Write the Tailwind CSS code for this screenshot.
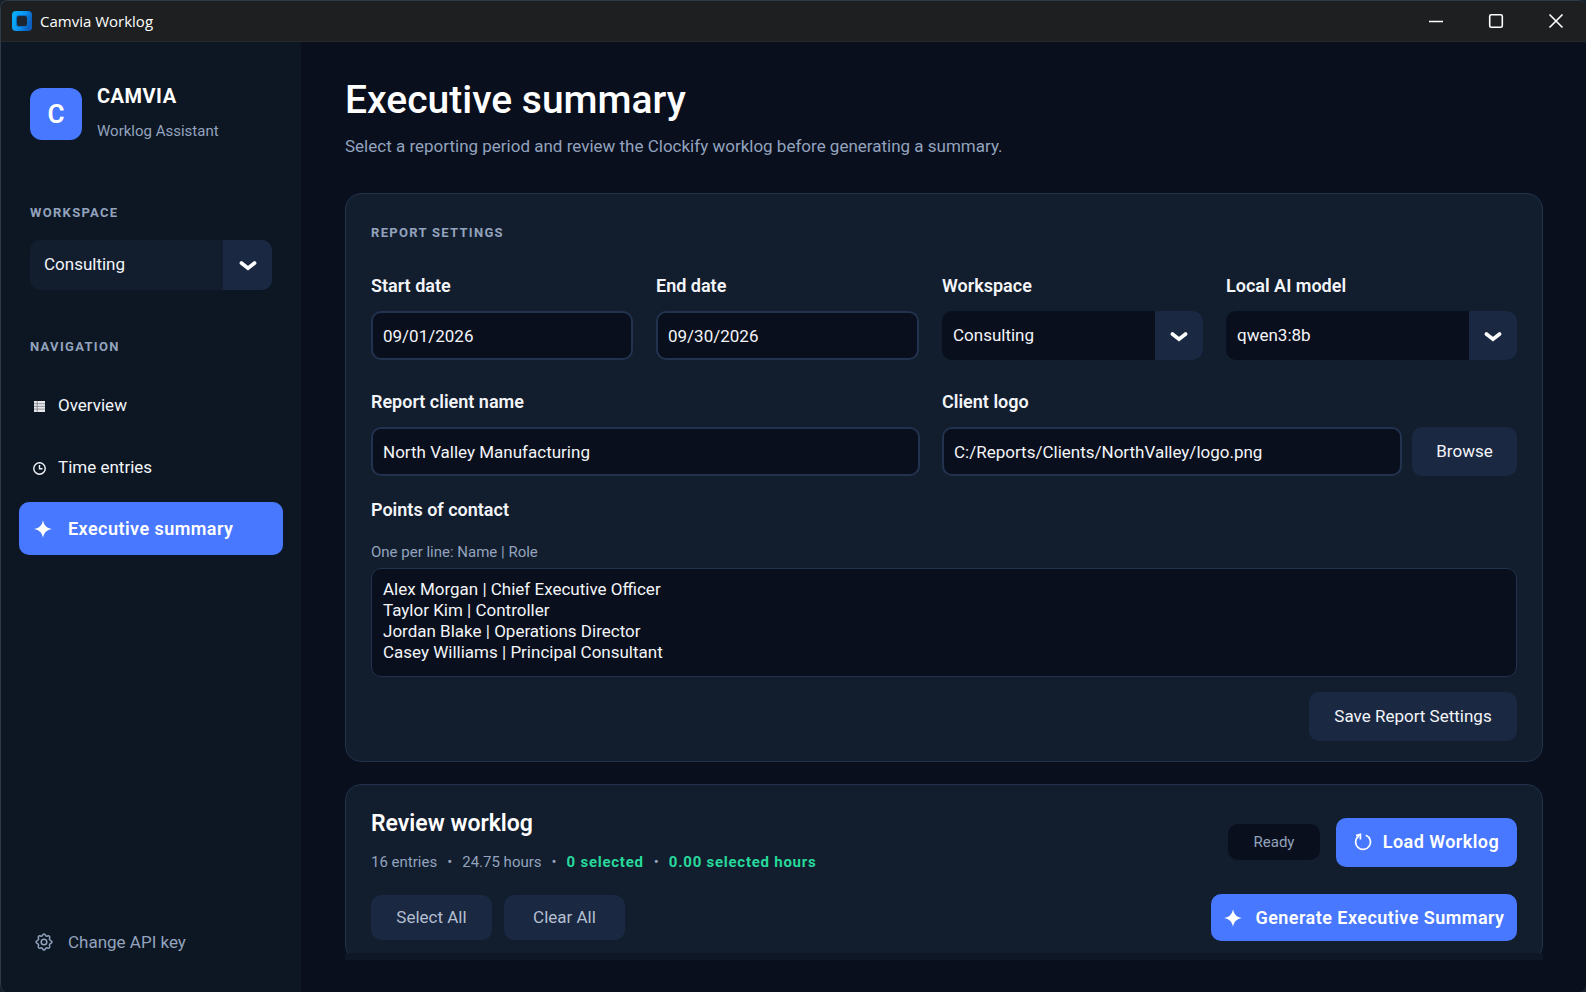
<!DOCTYPE html>
<html lang="en">
<head>
    <meta charset="UTF-8">
    <meta name="viewport" content="width=device-width, initial-scale=1.0">
    <title>Camvia Worklog</title>
    <script src="https://cdn.jsdelivr.net/npm/@tailwindcss/browser@4"></script>
</head>
<body class="bg-[#17212c] font-[Roboto,sans-serif] text-[17px] text-[#f3f5f9]">
<div class="flex min-h-screen flex-col overflow-hidden rounded-lg border-t border-l border-[#303a46] bg-[#090f1d]">
    <!-- Title bar -->
    <header class="flex h-[41px] items-center justify-between border-b border-[#27282b] bg-[#1e1f21] pl-[11px]">
        <div class="flex items-center gap-2">
            <svg class="size-5" viewBox="0 0 20 20">
                <defs>
                    <linearGradient id="marca" x1="0" y1="0" x2="1" y2="0.4">
                        <stop offset="0" stop-color="#08b4fb"/>
                        <stop offset="0.6" stop-color="#0c93ee"/>
                        <stop offset="1" stop-color="#0a5fc0"/>
                    </linearGradient>
                </defs>
                <rect width="20" height="20" rx="4" fill="url(#marca)"/>
                <rect x="4.5" y="4.5" width="11" height="11" rx="2.5" fill="#1d2630" stroke="#0b6fc9" stroke-width="1"/>
            </svg>
            <span class="font-['Open_Sans',sans-serif] text-[15px] text-white">Camvia Worklog</span>
        </div>
        <div class="flex h-full">
            <button type="button" aria-label="Minimize" class="flex w-[60px] items-center justify-center">
                <svg class="size-4" viewBox="0 0 16 16" stroke="#fff" stroke-width="1.5"><path d="M1 8.5h14"/></svg>
            </button>
            <button type="button" aria-label="Maximize" class="flex w-[60px] items-center justify-center">
                <svg class="size-4" viewBox="0 0 16 16" fill="none" stroke="#fff" stroke-width="1.6"><rect x="1.7" y="1.7" width="12.6" height="12.6" rx="1.5"/></svg>
            </button>
            <button type="button" aria-label="Close" class="flex w-[60px] items-center justify-center">
                <svg class="size-4" viewBox="0 0 16 16" stroke="#fff" stroke-width="1.6"><path d="M1.5 1.5l13 13M14.5 1.5l-13 13"/></svg>
            </button>
        </div>
    </header>

    <div class="flex flex-1">
        <!-- Sidebar -->
        <aside class="flex w-[300px] shrink-0 flex-col bg-[#0d1724] pb-[34px]">
            <div class="flex gap-[15px] px-[29px] pt-[46px]">
                <div class="flex size-[52px] items-center justify-center rounded-xl bg-[#4878ff] text-[26px] font-semibold text-white">C</div>
                <div class="-mt-1">
                    <p class="text-xl leading-6 font-bold tracking-wide text-white">CAMVIA</p>
                    <p class="mt-[13px] text-[15px] leading-5 text-[#93a3bd]">Worklog Assistant</p>
                </div>
            </div>

            <div class="px-[29px] pt-[62px]">
                <label for="workspace" class="block text-[13px] leading-5 font-bold tracking-widest text-[#93a3bd]">WORKSPACE</label>
                <div class="relative mt-[17px] w-[242px]">
                    <select id="workspace" class="block h-[50px] w-full appearance-none rounded-[10px] bg-[#121d2d] px-[14px]">
                        <option>Consulting</option>
                    </select>
                    <span class="pointer-events-none absolute inset-y-0 right-0 flex w-[49px] items-center justify-center rounded-r-[10px] bg-[#1a2842]">
                        <svg class="size-[18px]" viewBox="0 0 18 18" fill="none" stroke="#fff" stroke-width="3.6" stroke-linecap="round"><path d="M2.400 7L9 12.200l6.600-5.200"/></svg>
                    </span>
                </div>
            </div>

            <h2 class="px-[29px] pt-[47px] text-[13px] leading-5 font-bold tracking-widest text-[#93a3bd]">NAVIGATION</h2>
            <nav class="flex flex-col px-[18px] pt-[23px]">
                <a href="#" class="flex h-[52px] items-center gap-3 px-[14px]">
                    <svg class="size-[13px]" viewBox="0 0 13 13"><rect x="1" y="1" width="11" height="11" fill="#e9e9ec"/><path d="M1 3.700h11M1 6.400h11M1 9.100h11" stroke="#7b7f88" stroke-width=".8"/><path d="M4.200 1v11" stroke="#7b7f88" stroke-width=".8"/></svg>
                    Overview
                </a>
                <a href="#" class="mt-[10px] flex h-[52px] items-center gap-3 px-[14px]">
                    <svg class="size-[13px]" viewBox="0 0 13 13" fill="none" stroke="#f3f5f9" stroke-width="1.4"><circle cx="6.500" cy="6.500" r="5.700"/><path d="M6.500 3v3.700h3"/></svg>
                    Time entries
                </a>
                <a href="#" class="mt-2 flex h-[53px] w-[264px] items-center gap-4 rounded-[10px] bg-[#4878ff] px-[15px] text-lg font-semibold tracking-wide text-white">
                    <svg class="size-[18px]" viewBox="0 0 18 18" fill="currentColor"><path d="M9 .2C10 5.300 12.700 8 17.800 9 12.700 10 10 12.700 9 17.800 8 12.700 5.300 10 .2 9 5.300 8 8 5.300 9 .2z"/></svg>
                    Executive summary
                </a>
            </nav>

            <button type="button" class="mt-auto flex items-center gap-[15px] px-[34px] leading-8 text-[#93a3bd]">
                <svg class="size-[18px]" viewBox="0 0 18 18" fill="none" stroke="currentColor" stroke-width="1.5"><path d="M9 1c1.400 0 1.300 1.700 2.200 2.100.9.400 2.100-.900 3.200.1 1 1.100-.300 2.300.1 3.200C14.900 7.700 17 7.600 17 9s-2.100 1.300-2.500 2.600c-.4.900.900 2.100-.1 3.200-1.100 1-2.300-.300-3.200.1C10.300 15.300 10.400 17 9 17s-1.300-1.700-2.200-2.100c-.9-.4-2.100.9-3.200-.1-1-1.100.3-2.300-.1-3.200C3.100 10.300 1 10.400 1 9s2.100-1.300 2.500-2.600c.4-.9-.9-2.100.1-3.200 1.100-1 2.300.3 3.200-.1C7.700 2.700 7.600 1 9 1z"/><circle cx="9" cy="9" r="2.800"/></svg>
                Change API key
            </button>
        </aside>

        <main class="min-w-0 flex-1 pr-[43px] pl-11">
            <h1 class="pt-[34px] text-[39px] leading-[48px] font-medium text-white">Executive summary</h1>
            <p class="mt-[10px] leading-6 text-[#93a3bd]">Select a reporting period and review the Clockify worklog before generating a summary.</p>

            <!-- Report settings -->
            <form class="mt-[35px] rounded-2xl border border-[#22324b] bg-[#121d2d] px-[25px] pt-[29px] pb-5">
                <h2 class="text-[13px] leading-5 font-bold tracking-widest text-[#93a3bd]">REPORT SETTINGS</h2>

                <div class="mt-[31px] grid grid-cols-[262fr_263fr_261fr_291fr] gap-x-[23px]">
                    <div>
                        <label for="start" class="block text-lg leading-6 font-semibold">Start date</label>
                        <input id="start" type="text" value="09/01/2026" class="mt-[13px] block h-[49px] w-full rounded-[10px] border-2 border-[#22324f] bg-[#090f1c] px-[10px]">
                    </div>
                    <div>
                        <label for="end" class="block text-lg leading-6 font-semibold">End date</label>
                        <input id="end" type="text" value="09/30/2026" class="mt-[13px] block h-[49px] w-full rounded-[10px] border-2 border-[#22324f] bg-[#090f1c] px-[10px]">
                    </div>
                    <div>
                        <label for="reportWorkspace" class="block text-lg leading-6 font-semibold">Workspace</label>
                        <div class="relative mt-[13px]">
                            <select id="reportWorkspace" class="block h-[49px] w-full appearance-none rounded-[10px] bg-[#090f1c] px-[11px]">
                                <option>Consulting</option>
                            </select>
                            <span class="pointer-events-none absolute inset-y-0 right-0 flex w-12 items-center justify-center rounded-r-[10px] bg-[#1a2842]">
                                <svg class="size-[18px]" viewBox="0 0 18 18" fill="none" stroke="#fff" stroke-width="3.6" stroke-linecap="round"><path d="M2.400 7L9 12.200l6.600-5.200"/></svg>
                            </span>
                        </div>
                    </div>
                    <div>
                        <label for="model" class="block text-lg leading-6 font-semibold">Local AI model</label>
                        <div class="relative mt-[13px]">
                            <select id="model" class="block h-[49px] w-full appearance-none rounded-[10px] bg-[#090f1c] px-[11px]">
                                <option>qwen3:8b</option>
                            </select>
                            <span class="pointer-events-none absolute inset-y-0 right-0 flex w-12 items-center justify-center rounded-r-[10px] bg-[#1a2842]">
                                <svg class="size-[18px]" viewBox="0 0 18 18" fill="none" stroke="#fff" stroke-width="3.6" stroke-linecap="round"><path d="M2.400 7L9 12.200l6.600-5.200"/></svg>
                            </span>
                        </div>
                    </div>
                </div>

                <div class="mt-[30px] grid grid-cols-[549fr_575fr] gap-x-[22px]">
                    <div>
                        <label for="client" class="block text-lg leading-6 font-semibold">Report client name</label>
                        <input id="client" type="text" value="North Valley Manufacturing" class="mt-[13px] block h-[49px] w-full rounded-[10px] border-2 border-[#22324f] bg-[#090f1c] px-[10px]">
                    </div>
                    <div>
                        <label for="logo" class="block text-lg leading-6 font-semibold">Client logo</label>
                        <div class="mt-[13px] flex gap-[10px]">
                            <input id="logo" type="text" value="C:/Reports/Clients/NorthValley/logo.png" class="h-[49px] min-w-0 flex-1 rounded-[10px] border-2 border-[#22324f] bg-[#090f1c] px-[10px]">
                            <button type="button" class="h-[49px] w-[105px] rounded-[10px] bg-[#1a2842]">Browse</button>
                        </div>
                    </div>
                </div>

                <label for="contacts" class="mt-[22px] block text-lg leading-6 font-semibold">Points of contact</label>
                <p class="mt-5 text-[15px] leading-5 text-[#93a3bd]">One per line: Name | Role</p>
                <textarea id="contacts" rows="4" class="mt-[6px] block h-[109px] w-full resize-none rounded-[10px] border border-[#22324b] bg-[#090f1c] px-[11px] py-[10px] leading-[21px]">Alex Morgan | Chief Executive Officer
Taylor Kim | Controller
Jordan Blake | Operations Director
Casey Williams | Principal Consultant</textarea>

                <div class="mt-[15px] flex justify-end">
                    <button type="button" class="h-[49px] w-[208px] rounded-[10px] bg-[#1a2842]">Save Report Settings</button>
                </div>
            </form>

            <!-- Review worklog, cut off by the scroll area -->
            <section class="mt-[22px] overflow-hidden">
                <div class="-mb-2 rounded-2xl border border-[#22324b] bg-[#121d2d] px-[25px] pt-[25px] pb-[19px]">
                    <div class="flex items-center justify-between">
                        <div>
                            <h2 class="text-[23px] leading-7 font-semibold text-white">Review worklog</h2>
                            <p class="mt-3 flex gap-[10px] text-[15px] leading-6 text-[#93a3bd]">
                                <span>16 entries</span>
                                <span>•</span>
                                <span>24.75 hours</span>
                                <span>•</span>
                                <span class="font-bold tracking-wider text-[#27d99c]">0 selected</span>
                                <span>•</span>
                                <span class="font-bold tracking-wider text-[#27d99c]">0.00 selected hours</span>
                            </p>
                        </div>
                        <div class="flex items-center gap-4">
                            <span class="flex h-9 w-[92px] items-center justify-center rounded-[10px] bg-[#090f1c] text-[15px] text-[#93a3bd]">Ready</span>
                            <button type="button" class="flex h-[49px] w-[181px] items-center justify-center gap-[11px] rounded-[10px] bg-[#4878ff] text-lg font-semibold tracking-wide text-white">
                                <svg class="size-[18px]" viewBox="0 0 18 18" fill="none" stroke="currentColor" stroke-width="1.700"><path d="M11.800 2.200a7.400 7.400 0 1 1-7 .8"/><path d="M2 2.600l4.400-1.200v5"/></svg>
                                Load Worklog
                            </button>
                        </div>
                    </div>
                    <div class="mt-5 flex items-center justify-between">
                        <div class="flex gap-3 text-[#b4bfd0]">
                            <button type="button" class="h-[45px] w-[121px] rounded-[10px] bg-[#1a2842]">Select All</button>
                            <button type="button" class="h-[45px] w-[121px] rounded-[10px] bg-[#1a2842]">Clear All</button>
                        </div>
                        <button type="button" class="flex h-[47px] w-[306px] items-center justify-center gap-[14px] rounded-[10px] bg-[#4878ff] text-lg font-semibold tracking-wide text-white">
                            <svg class="size-[18px]" viewBox="0 0 18 18" fill="currentColor"><path d="M9 .2C10 5.300 12.700 8 17.800 9 12.700 10 10 12.700 9 17.800 8 12.700 5.300 10 .2 9 5.300 8 8 5.300 9 .2z"/></svg>
                            Generate Executive Summary
                        </button>
                    </div>
                </div>
            </section>
            <div class="h-[7px] bg-[#0e1725]"></div>
        </main>
    </div>
</div>
</body>
</html>
